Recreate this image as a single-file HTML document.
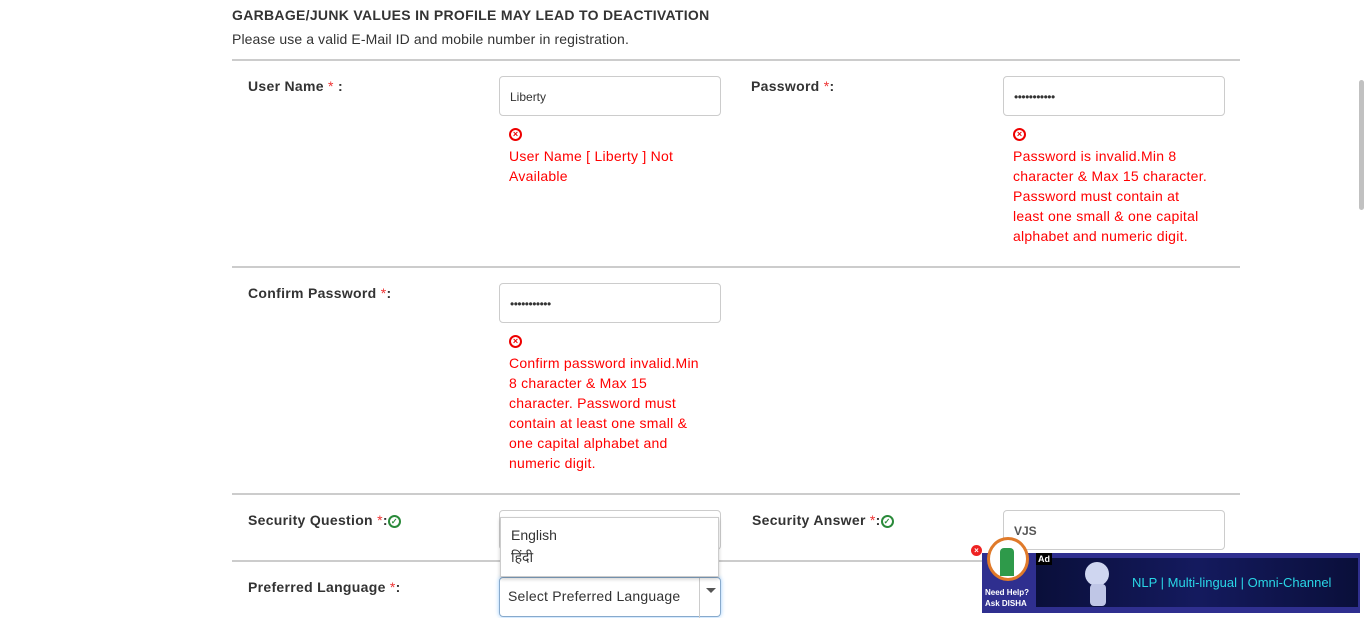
<!DOCTYPE html>
<html><head><meta charset="utf-8"><style>
*{margin:0;padding:0;box-sizing:border-box}
body{width:1366px;height:613px;overflow:hidden;background:#fff;font-family:"Liberation Sans",Arial,sans-serif;position:relative;color:#333}
.a{position:absolute}
.h{left:232px;top:7px;font-size:14px;font-weight:bold;letter-spacing:.3px;color:#333}
.sub{left:232px;top:31px;font-size:14px;color:#333;letter-spacing:.1px}
.hr{left:232px;width:1008px;height:2px;background:#ccc}
.lbl{font-size:14px;font-weight:bold;color:#333;letter-spacing:.3px}
.st{color:#e33;font-weight:normal}
.in{border:1px solid #ccc;border-radius:4px;height:40px;width:222px;font-size:12px;padding:13px 10px;color:#333}
.err{font-size:14px;color:#f00;line-height:20px;letter-spacing:.25px}
.ic{width:13px;height:13px;border:2px solid #e00;border-radius:50%;font-size:9px;line-height:9px;text-align:center;color:#e00;font-weight:bold}
.ok{display:inline-block;width:13px;height:13px;border:2px solid #2a8a3a;border-radius:50%;font-size:8px;line-height:9px;text-align:center;color:#2a8a3a;vertical-align:1px}
.dots{font-size:12px;letter-spacing:-.5px}
</style></head><body>
<div class="a h">GARBAGE/JUNK VALUES IN PROFILE MAY LEAD TO DEACTIVATION</div>
<div class="a sub">Please use a valid E-Mail ID and mobile number in registration.</div>
<div class="a hr" style="top:59px"></div>

<div class="a lbl" style="left:248px;top:78px">User Name <span class="st">*</span> :</div>
<div class="a in" style="left:499px;top:76px">Liberty</div>
<div class="a ic" style="left:509px;top:128px">×</div>
<div class="a err" style="left:509px;top:146px;width:190px">User Name [ Liberty ] Not Available</div>

<div class="a lbl" style="left:751px;top:78px">Password <span class="st">*</span>:</div>
<div class="a in dots" style="left:1003px;top:76px">•••••••••••</div>
<div class="a ic" style="left:1013px;top:128px">×</div>
<div class="a err" style="left:1013px;top:146px;width:200px">Password is invalid.Min 8 character &amp; Max 15 character. Password must contain at least one small &amp; one capital alphabet and numeric digit.</div>

<div class="a hr" style="top:266px"></div>
<div class="a lbl" style="left:248px;top:285px">Confirm Password <span class="st">*</span>:</div>
<div class="a in dots" style="left:499px;top:283px">•••••••••••</div>
<div class="a ic" style="left:509px;top:335px">×</div>
<div class="a err" style="left:509px;top:353px;width:196px">Confirm password invalid.Min 8 character &amp; Max 15 character. Password must contain at least one small &amp; one capital alphabet and numeric digit.</div>

<div class="a hr" style="top:493px"></div>
<div class="a lbl" style="left:248px;top:512px">Security Question <span class="st">*</span>:<span class="ok">✓</span></div>
<div class="a in" style="left:499px;top:510px;width:222px"></div>
<div class="a lbl" style="left:752px;top:512px">Security Answer <span class="st">*</span>:<span class="ok">✓</span></div>
<div class="a in" style="left:1003px;top:510px;font-weight:bold;color:#555">VJS</div>

<div class="a hr" style="top:560px"></div>
<div class="a lbl" style="left:248px;top:579px">Preferred Language <span class="st">*</span>:</div>
<div class="a" style="left:499px;top:577px;width:222px;height:40px;border:1px solid #8ac;border-radius:4px;box-shadow:0 0 4px #9cf;font-size:14px;color:#333;padding:10px 8px;letter-spacing:.2px">Select Preferred Language<div class="a" style="right:0;top:0;width:21px;height:40px;border-left:1px solid #ccc"><div class="a" style="left:6px;top:10px;border:5px solid transparent;border-top:5px solid #555"></div></div></div>
<div class="a" style="left:500px;top:517px;width:219px;height:60px;background:#fff;border:1px solid #ccc;box-shadow:0 2px 4px rgba(0,0,0,.2);font-size:14px;color:#333;padding:6px 10px;line-height:22px">English<br><span style="font-family:'Liberation Sans','Noto Sans CJK SC',sans-serif">हिंदी</span></div>

<div class="a" style="left:982px;top:553px;width:378px;height:60px;background:#2f2f8f"></div>
<div class="a" style="left:1036px;top:558px;width:322px;height:49px;background:linear-gradient(90deg,#0a0f3a,#141a5e 50%,#0a0f3a)"></div>
<div class="a" style="left:1036px;top:553px;background:#000;color:#fff;font-size:9px;font-weight:bold;padding:1px 2px">Ad</div>
<div class="a" style="left:1085px;top:562px;width:24px;height:24px;border-radius:50%;background:#cfd6f0"></div>
<div class="a" style="left:1090px;top:584px;width:16px;height:22px;background:#bfc6e6;border-radius:4px"></div>
<div class="a" style="left:1132px;top:575px;font-size:13px;color:#29d6e6">NLP | Multi-lingual | Omni-Channel</div>
<div class="a" style="left:987px;top:537px;width:42px;height:44px;border-radius:50%;border:3px solid #e07a2a;background:#fff"></div>
<div class="a" style="left:1000px;top:548px;width:14px;height:28px;background:#2e9a4a;border-radius:4px 4px 0 0"></div>
<div class="a" style="left:971px;top:545px;width:11px;height:11px;border-radius:50%;background:#e22;color:#fff;font-size:8px;line-height:11px;text-align:center;font-weight:bold">×</div>
<div class="a" style="left:985px;top:587px;font-size:8px;color:#fff;font-weight:bold;line-height:11px">Need Help?<br>Ask DISHA</div>

<div class="a" style="left:1359px;top:80px;width:5px;height:130px;background:#c1c1c1;border-radius:3px"></div>
</body></html>
